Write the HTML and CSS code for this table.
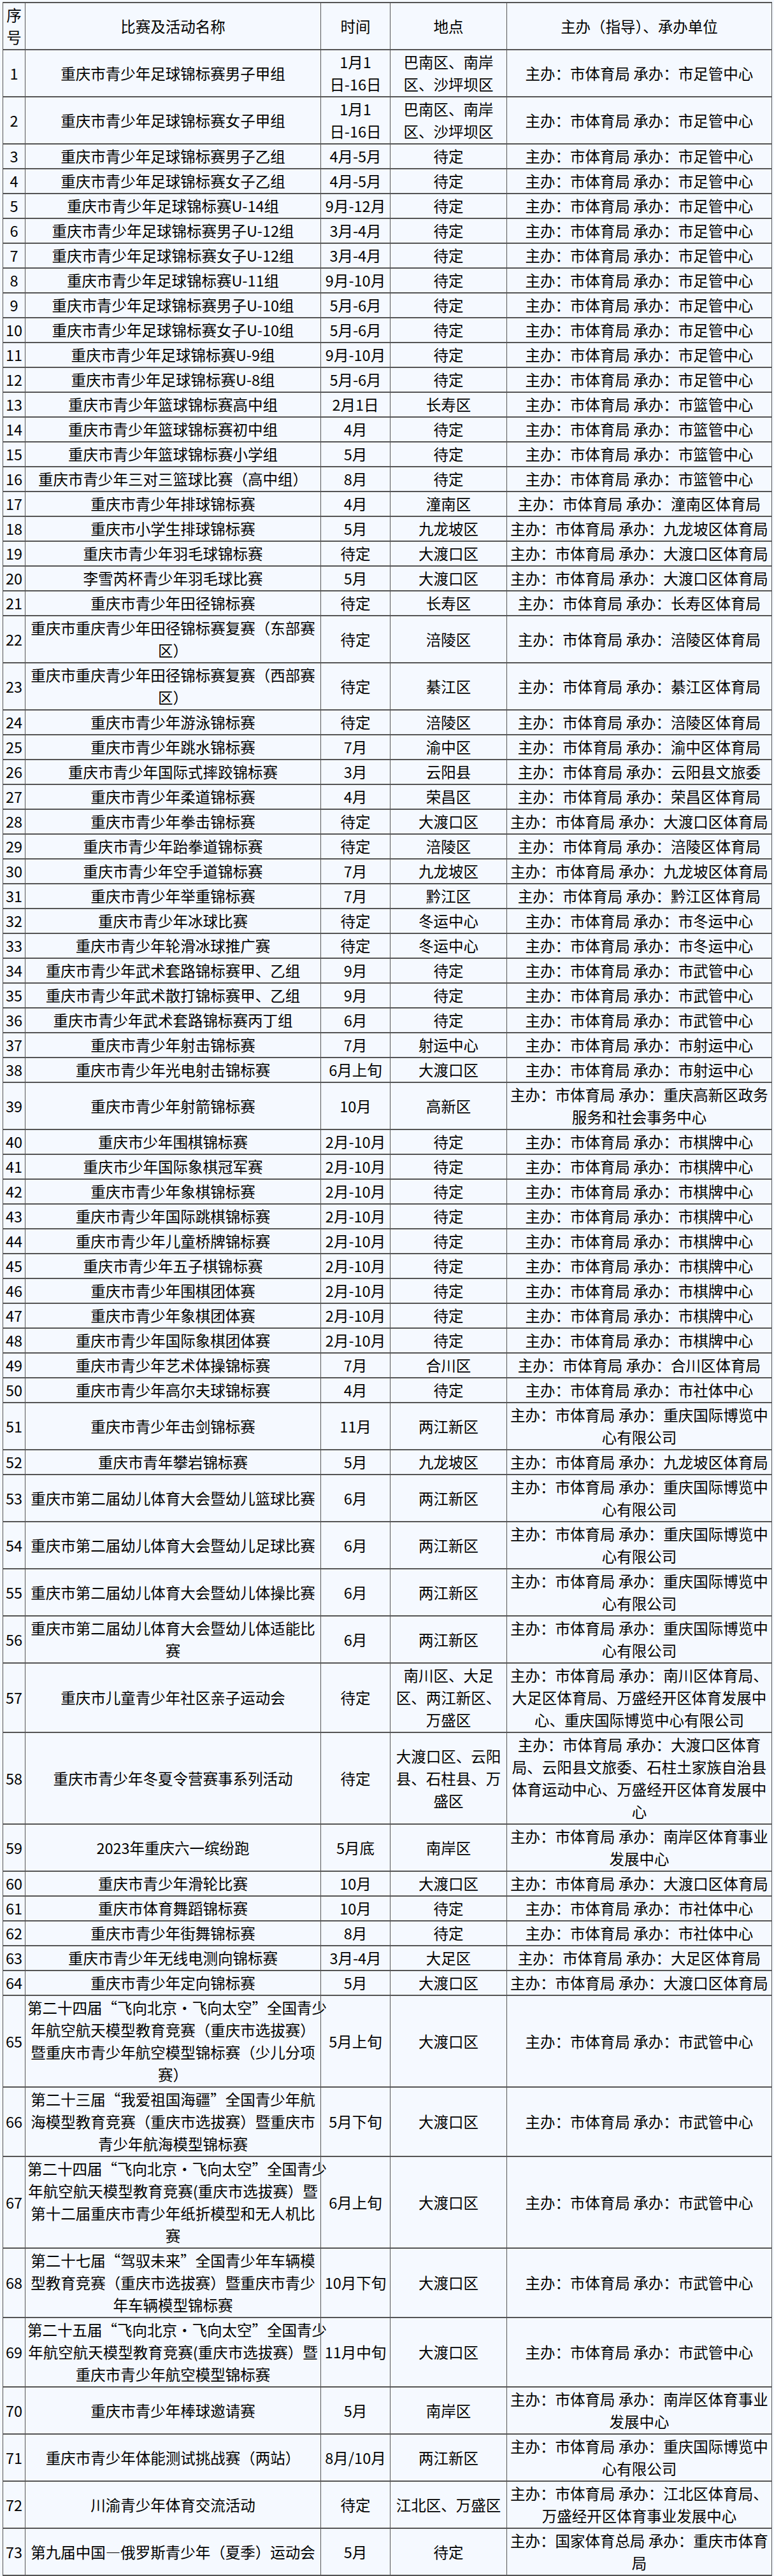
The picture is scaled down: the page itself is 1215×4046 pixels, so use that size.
FILE: index.html
```
<!DOCTYPE html>
<html lang="zh-CN">
<head>
<meta charset="utf-8">
<title>2023年重庆市青少年体育赛事活动计划</title>
<link rel="stylesheet" href="styles.css">
</head>
<body>
<table class="schedule">
<colgroup>
<col class="col-no"><col class="col-name"><col class="col-time"><col class="col-place"><col class="col-org">
</colgroup>
<thead>
<tr><td class="no">序<br>号</td><td>比赛及活动名称</td><td>时间</td><td>地点</td><td>主办（指导）、承办单位</td></tr>
</thead>
<tbody>
<tr><td class="no">1</td><td>重庆市青少年足球锦标赛男子甲组</td><td>1月1<br>日-16日</td><td>巴南区、南岸<br>区、沙坪坝区</td><td>主办：市体育局 承办：市足管中心</td></tr>
<tr><td class="no">2</td><td>重庆市青少年足球锦标赛女子甲组</td><td>1月1<br>日-16日</td><td>巴南区、南岸<br>区、沙坪坝区</td><td>主办：市体育局 承办：市足管中心</td></tr>
<tr><td class="no">3</td><td>重庆市青少年足球锦标赛男子乙组</td><td>4月-5月</td><td>待定</td><td>主办：市体育局 承办：市足管中心</td></tr>
<tr><td class="no">4</td><td>重庆市青少年足球锦标赛女子乙组</td><td>4月-5月</td><td>待定</td><td>主办：市体育局 承办：市足管中心</td></tr>
<tr><td class="no">5</td><td>重庆市青少年足球锦标赛U-14组</td><td>9月-12月</td><td>待定</td><td>主办：市体育局 承办：市足管中心</td></tr>
<tr><td class="no">6</td><td>重庆市青少年足球锦标赛男子U-12组</td><td>3月-4月</td><td>待定</td><td>主办：市体育局 承办：市足管中心</td></tr>
<tr><td class="no">7</td><td>重庆市青少年足球锦标赛女子U-12组</td><td>3月-4月</td><td>待定</td><td>主办：市体育局 承办：市足管中心</td></tr>
<tr><td class="no">8</td><td>重庆市青少年足球锦标赛U-11组</td><td>9月-10月</td><td>待定</td><td>主办：市体育局 承办：市足管中心</td></tr>
<tr><td class="no">9</td><td>重庆市青少年足球锦标赛男子U-10组</td><td>5月-6月</td><td>待定</td><td>主办：市体育局 承办：市足管中心</td></tr>
<tr><td class="no">10</td><td>重庆市青少年足球锦标赛女子U-10组</td><td>5月-6月</td><td>待定</td><td>主办：市体育局 承办：市足管中心</td></tr>
<tr><td class="no">11</td><td>重庆市青少年足球锦标赛U-9组</td><td>9月-10月</td><td>待定</td><td>主办：市体育局 承办：市足管中心</td></tr>
<tr><td class="no">12</td><td>重庆市青少年足球锦标赛U-8组</td><td>5月-6月</td><td>待定</td><td>主办：市体育局 承办：市足管中心</td></tr>
<tr><td class="no">13</td><td>重庆市青少年篮球锦标赛高中组</td><td>2月1日</td><td>长寿区</td><td>主办：市体育局 承办：市篮管中心</td></tr>
<tr><td class="no">14</td><td>重庆市青少年篮球锦标赛初中组</td><td>4月</td><td>待定</td><td>主办：市体育局 承办：市篮管中心</td></tr>
<tr><td class="no">15</td><td>重庆市青少年篮球锦标赛小学组</td><td>5月</td><td>待定</td><td>主办：市体育局 承办：市篮管中心</td></tr>
<tr><td class="no">16</td><td>重庆市青少年三对三篮球比赛（高中组）</td><td>8月</td><td>待定</td><td>主办：市体育局 承办：市篮管中心</td></tr>
<tr><td class="no">17</td><td>重庆市青少年排球锦标赛</td><td>4月</td><td>潼南区</td><td>主办：市体育局 承办：潼南区体育局</td></tr>
<tr><td class="no">18</td><td>重庆市小学生排球锦标赛</td><td>5月</td><td>九龙坡区</td><td>主办：市体育局 承办：九龙坡区体育局</td></tr>
<tr><td class="no">19</td><td>重庆市青少年羽毛球锦标赛</td><td>待定</td><td>大渡口区</td><td>主办：市体育局 承办：大渡口区体育局</td></tr>
<tr><td class="no">20</td><td>李雪芮杯青少年羽毛球比赛</td><td>5月</td><td>大渡口区</td><td>主办：市体育局 承办：大渡口区体育局</td></tr>
<tr><td class="no">21</td><td>重庆市青少年田径锦标赛</td><td>待定</td><td>长寿区</td><td>主办：市体育局 承办：长寿区体育局</td></tr>
<tr><td class="no">22</td><td>重庆市重庆青少年田径锦标赛复赛（东部赛<br>区）</td><td>待定</td><td>涪陵区</td><td>主办：市体育局 承办：涪陵区体育局</td></tr>
<tr><td class="no">23</td><td>重庆市重庆青少年田径锦标赛复赛（西部赛<br>区）</td><td>待定</td><td>綦江区</td><td>主办：市体育局 承办：綦江区体育局</td></tr>
<tr><td class="no">24</td><td>重庆市青少年游泳锦标赛</td><td>待定</td><td>涪陵区</td><td>主办：市体育局 承办：涪陵区体育局</td></tr>
<tr><td class="no">25</td><td>重庆市青少年跳水锦标赛</td><td>7月</td><td>渝中区</td><td>主办：市体育局 承办：渝中区体育局</td></tr>
<tr><td class="no">26</td><td>重庆市青少年国际式摔跤锦标赛</td><td>3月</td><td>云阳县</td><td>主办：市体育局 承办：云阳县文旅委</td></tr>
<tr><td class="no">27</td><td>重庆市青少年柔道锦标赛</td><td>4月</td><td>荣昌区</td><td>主办：市体育局 承办：荣昌区体育局</td></tr>
<tr><td class="no">28</td><td>重庆市青少年拳击锦标赛</td><td>待定</td><td>大渡口区</td><td>主办：市体育局 承办：大渡口区体育局</td></tr>
<tr><td class="no">29</td><td>重庆市青少年跆拳道锦标赛</td><td>待定</td><td>涪陵区</td><td>主办：市体育局 承办：涪陵区体育局</td></tr>
<tr><td class="no">30</td><td>重庆市青少年空手道锦标赛</td><td>7月</td><td>九龙坡区</td><td>主办：市体育局 承办：九龙坡区体育局</td></tr>
<tr><td class="no">31</td><td>重庆市青少年举重锦标赛</td><td>7月</td><td>黔江区</td><td>主办：市体育局 承办：黔江区体育局</td></tr>
<tr><td class="no">32</td><td>重庆市青少年冰球比赛</td><td>待定</td><td>冬运中心</td><td>主办：市体育局 承办：市冬运中心</td></tr>
<tr><td class="no">33</td><td>重庆市青少年轮滑冰球推广赛</td><td>待定</td><td>冬运中心</td><td>主办：市体育局 承办：市冬运中心</td></tr>
<tr><td class="no">34</td><td>重庆市青少年武术套路锦标赛甲、乙组</td><td>9月</td><td>待定</td><td>主办：市体育局 承办：市武管中心</td></tr>
<tr><td class="no">35</td><td>重庆市青少年武术散打锦标赛甲、乙组</td><td>9月</td><td>待定</td><td>主办：市体育局 承办：市武管中心</td></tr>
<tr><td class="no">36</td><td>重庆市青少年武术套路锦标赛丙丁组</td><td>6月</td><td>待定</td><td>主办：市体育局 承办：市武管中心</td></tr>
<tr><td class="no">37</td><td>重庆市青少年射击锦标赛</td><td>7月</td><td>射运中心</td><td>主办：市体育局 承办：市射运中心</td></tr>
<tr><td class="no">38</td><td>重庆市青少年光电射击锦标赛</td><td>6月上旬</td><td>大渡口区</td><td>主办：市体育局 承办：市射运中心</td></tr>
<tr><td class="no">39</td><td>重庆市青少年射箭锦标赛</td><td>10月</td><td>高新区</td><td>主办：市体育局 承办：重庆高新区政务<br>服务和社会事务中心</td></tr>
<tr><td class="no">40</td><td>重庆市少年围棋锦标赛</td><td>2月-10月</td><td>待定</td><td>主办：市体育局 承办：市棋牌中心</td></tr>
<tr><td class="no">41</td><td>重庆市少年国际象棋冠军赛</td><td>2月-10月</td><td>待定</td><td>主办：市体育局 承办：市棋牌中心</td></tr>
<tr><td class="no">42</td><td>重庆市青少年象棋锦标赛</td><td>2月-10月</td><td>待定</td><td>主办：市体育局 承办：市棋牌中心</td></tr>
<tr><td class="no">43</td><td>重庆市青少年国际跳棋锦标赛</td><td>2月-10月</td><td>待定</td><td>主办：市体育局 承办：市棋牌中心</td></tr>
<tr><td class="no">44</td><td>重庆市青少年儿童桥牌锦标赛</td><td>2月-10月</td><td>待定</td><td>主办：市体育局 承办：市棋牌中心</td></tr>
<tr><td class="no">45</td><td>重庆市青少年五子棋锦标赛</td><td>2月-10月</td><td>待定</td><td>主办：市体育局 承办：市棋牌中心</td></tr>
<tr><td class="no">46</td><td>重庆市青少年围棋团体赛</td><td>2月-10月</td><td>待定</td><td>主办：市体育局 承办：市棋牌中心</td></tr>
<tr><td class="no">47</td><td>重庆市青少年象棋团体赛</td><td>2月-10月</td><td>待定</td><td>主办：市体育局 承办：市棋牌中心</td></tr>
<tr><td class="no">48</td><td>重庆市青少年国际象棋团体赛</td><td>2月-10月</td><td>待定</td><td>主办：市体育局 承办：市棋牌中心</td></tr>
<tr><td class="no">49</td><td>重庆市青少年艺术体操锦标赛</td><td>7月</td><td>合川区</td><td>主办：市体育局 承办：合川区体育局</td></tr>
<tr><td class="no">50</td><td>重庆市青少年高尔夫球锦标赛</td><td>4月</td><td>待定</td><td>主办：市体育局 承办：市社体中心</td></tr>
<tr><td class="no">51</td><td>重庆市青少年击剑锦标赛</td><td>11月</td><td>两江新区</td><td>主办：市体育局 承办：重庆国际博览中<br>心有限公司</td></tr>
<tr><td class="no">52</td><td>重庆市青年攀岩锦标赛</td><td>5月</td><td>九龙坡区</td><td>主办：市体育局 承办：九龙坡区体育局</td></tr>
<tr><td class="no">53</td><td>重庆市第二届幼儿体育大会暨幼儿篮球比赛</td><td>6月</td><td>两江新区</td><td>主办：市体育局 承办：重庆国际博览中<br>心有限公司</td></tr>
<tr><td class="no">54</td><td>重庆市第二届幼儿体育大会暨幼儿足球比赛</td><td>6月</td><td>两江新区</td><td>主办：市体育局 承办：重庆国际博览中<br>心有限公司</td></tr>
<tr><td class="no">55</td><td>重庆市第二届幼儿体育大会暨幼儿体操比赛</td><td>6月</td><td>两江新区</td><td>主办：市体育局 承办：重庆国际博览中<br>心有限公司</td></tr>
<tr><td class="no">56</td><td>重庆市第二届幼儿体育大会暨幼儿体适能比<br>赛</td><td>6月</td><td>两江新区</td><td>主办：市体育局 承办：重庆国际博览中<br>心有限公司</td></tr>
<tr><td class="no">57</td><td>重庆市儿童青少年社区亲子运动会</td><td>待定</td><td>南川区、大足<br>区、两江新区、<br>万盛区</td><td>主办：市体育局 承办：南川区体育局、<br>大足区体育局、万盛经开区体育发展中<br>心、重庆国际博览中心有限公司</td></tr>
<tr><td class="no">58</td><td>重庆市青少年冬夏令营赛事系列活动</td><td>待定</td><td>大渡口区、云阳<br>县、石柱县、万<br>盛区</td><td>主办：市体育局 承办：大渡口区体育<br>局、云阳县文旅委、石柱土家族自治县<br>体育运动中心、万盛经开区体育发展中<br>心</td></tr>
<tr><td class="no">59</td><td>2023年重庆六一缤纷跑</td><td>5月底</td><td>南岸区</td><td>主办：市体育局 承办：南岸区体育事业<br>发展中心</td></tr>
<tr><td class="no">60</td><td>重庆市青少年滑轮比赛</td><td>10月</td><td>大渡口区</td><td>主办：市体育局 承办：大渡口区体育局</td></tr>
<tr><td class="no">61</td><td>重庆市体育舞蹈锦标赛</td><td>10月</td><td>待定</td><td>主办：市体育局 承办：市社体中心</td></tr>
<tr><td class="no">62</td><td>重庆市青少年街舞锦标赛</td><td>8月</td><td>待定</td><td>主办：市体育局 承办：市社体中心</td></tr>
<tr><td class="no">63</td><td>重庆市青少年无线电测向锦标赛</td><td>3月-4月</td><td>大足区</td><td>主办：市体育局 承办：大足区体育局</td></tr>
<tr><td class="no">64</td><td>重庆市青少年定向锦标赛</td><td>5月</td><td>大渡口区</td><td>主办：市体育局 承办：大渡口区体育局</td></tr>
<tr><td class="no">65</td><td>第二十四届“飞向北京·飞向太空”全国青少<br>年航空航天模型教育竞赛（重庆市选拔赛）<br>暨重庆市青少年航空模型锦标赛（少儿分项<br>赛）</td><td>5月上旬</td><td>大渡口区</td><td>主办：市体育局 承办：市武管中心</td></tr>
<tr><td class="no">66</td><td>第二十三届“我爱祖国海疆”全国青少年航<br>海模型教育竞赛（重庆市选拔赛）暨重庆市<br>青少年航海模型锦标赛</td><td>5月下旬</td><td>大渡口区</td><td>主办：市体育局 承办：市武管中心</td></tr>
<tr><td class="no">67</td><td>第二十四届“飞向北京·飞向太空”全国青少<br>年航空航天模型教育竞赛(重庆市选拔赛）暨<br>第十二届重庆市青少年纸折模型和无人机比<br>赛</td><td>6月上旬</td><td>大渡口区</td><td>主办：市体育局 承办：市武管中心</td></tr>
<tr><td class="no">68</td><td>第二十七届“驾驭未来”全国青少年车辆模<br>型教育竞赛（重庆市选拔赛）暨重庆市青少<br>年车辆模型锦标赛</td><td>10月下旬</td><td>大渡口区</td><td>主办：市体育局 承办：市武管中心</td></tr>
<tr><td class="no">69</td><td>第二十五届“飞向北京·飞向太空”全国青少<br>年航空航天模型教育竞赛(重庆市选拔赛）暨<br>重庆市青少年航空模型锦标赛</td><td>11月中旬</td><td>大渡口区</td><td>主办：市体育局 承办：市武管中心</td></tr>
<tr><td class="no">70</td><td>重庆市青少年棒球邀请赛</td><td>5月</td><td>南岸区</td><td>主办：市体育局 承办：南岸区体育事业<br>发展中心</td></tr>
<tr><td class="no">71</td><td>重庆市青少年体能测试挑战赛（两站）</td><td>8月/10月</td><td>两江新区</td><td>主办：市体育局 承办：重庆国际博览中<br>心有限公司</td></tr>
<tr><td class="no">72</td><td>川渝青少年体育交流活动</td><td>待定</td><td>江北区、万盛区</td><td>主办：市体育局 承办：江北区体育局、<br>万盛经开区体育事业发展中心</td></tr>
<tr><td class="no">73</td><td>第九届中国—俄罗斯青少年（夏季）运动会</td><td>5月</td><td>待定</td><td>主办：国家体育总局 承办：重庆市体育<br>局</td></tr>
</tbody>
</table>
</body>
</html>
```

FILE: styles.css
```
html, body {
  margin: 0;
  padding: 0;
  background: #f5f9ff;
}

body {
  padding: 3px 0 0 4px;
  font-family: "Noto Sans CJK SC", "Noto Sans", sans-serif;
  color: #000;
}

.schedule {
  width: 1207px;
  table-layout: fixed;
  border-collapse: collapse;
  background: #f5f9ff;
}

.col-no { width: 35px; }
.col-name { width: 464px; }
.col-time { width: 109px; }
.col-place { width: 183px; }
.col-org { width: 416px; }

.schedule td {
  border-left: 1px solid #555;
  border-right: 1px solid #555;
  border-top: 2px solid #555;
  border-bottom: 2px solid #555;
  padding: 1px 3px;
  font-size: 23.5px;
  line-height: 35px;
  text-align: center;
  vertical-align: middle;
  white-space: nowrap;
}

.schedule td.no {
  padding: 1px 0;
}
```
